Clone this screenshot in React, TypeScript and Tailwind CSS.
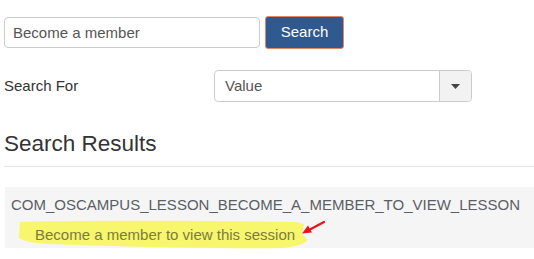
import React from "react";

function Caret() {
  return (
    <svg width="9" height="5" viewBox="0 0 9 5">
      <path d="M0 0 L9 0 L4.5 5 Z" fill="#444" />
    </svg>
  );
}

// yellow marker stroke drawn over the screenshot
function Highlight() {
  return (
    <svg
      className="absolute left-[-17px] top-[-3px] pointer-events-none"
      width="292"
      height="30"
      viewBox="0 0 292 30"
    >
      <path
        d="M2 2 C80 0 200 1 278 2 L286 4 L284 14 L290 20 C285 25 275 27 265 28 C180 29 90 26 30 24 C15 23 5 21 1 18 Z"
        fill="#f7f66c"
      />
    </svg>
  );
}

function Arrow() {
  return (
    <svg
      className="absolute left-[265px] top-[-4px] pointer-events-none"
      width="28"
      height="18"
      viewBox="0 0 28 18"
    >
      <path d="M24 3 L9 11" stroke="#e8141c" strokeWidth="2.2" strokeLinecap="round" />
      <path d="M2 14.5 L12 13.5 L8 6.5 Z" fill="#e8141c" />
    </svg>
  );
}

export default function App() {
  return (
    <div className="w-[534px] h-[259px] bg-white overflow-hidden pl-[4px] font-['Liberation_Sans',Arial,sans-serif] text-[#333]">
      <div className="flex items-center gap-[5px] pt-[16px]">
        <input
          readOnly
          value="Become a member"
          className="w-[256px] h-[31px] border border-[#cccccc] rounded-[4px] px-[8px] text-[15px] text-[#555] outline-none"
        />
        <button className="w-[79px] h-[33px] bg-[#30598f] border border-[#e0876a] rounded-[3px] text-white text-[15px]">
          Search
        </button>
      </div>

      <div className="flex items-center mt-[21px]">
        <label className="w-[210px] text-[15px] text-[#333]">Search For</label>
        <div className="flex w-[258px] h-[32px] border border-[#cccccc] rounded-[4px] overflow-hidden">
          <div className="flex-1 flex items-center px-[10px] text-[15px] text-[#555]">
            Value
          </div>
          <div className="w-[32px] flex items-center justify-center bg-[#f2f2f2] border-l border-[#cccccc]">
            <Caret />
          </div>
        </div>
      </div>

      <h2 className="mt-[29px] text-[22.5px] leading-[26px] text-[#333]">Search Results</h2>
      <div className="mt-[9px] border-t border-[#e5e5e5]" />

      <div className="mt-[20px] ml-[1px] h-[61px] bg-[#f5f5f5] pl-[6px] pt-[9px]">
        <div className="text-[15px] leading-[18px] text-[#5a5e66] whitespace-nowrap">
          COM_OSCAMPUS_LESSON_BECOME_A_MEMBER_TO_VIEW_LESSON
        </div>
        <div className="relative mt-[9px] ml-[24px] w-fit">
          <Highlight />
          <Arrow />
          <span className="relative text-[15px] leading-[18px] text-[#7c7c3e]">
            Become a member to view this session
          </span>
        </div>
      </div>
    </div>
  );
}
